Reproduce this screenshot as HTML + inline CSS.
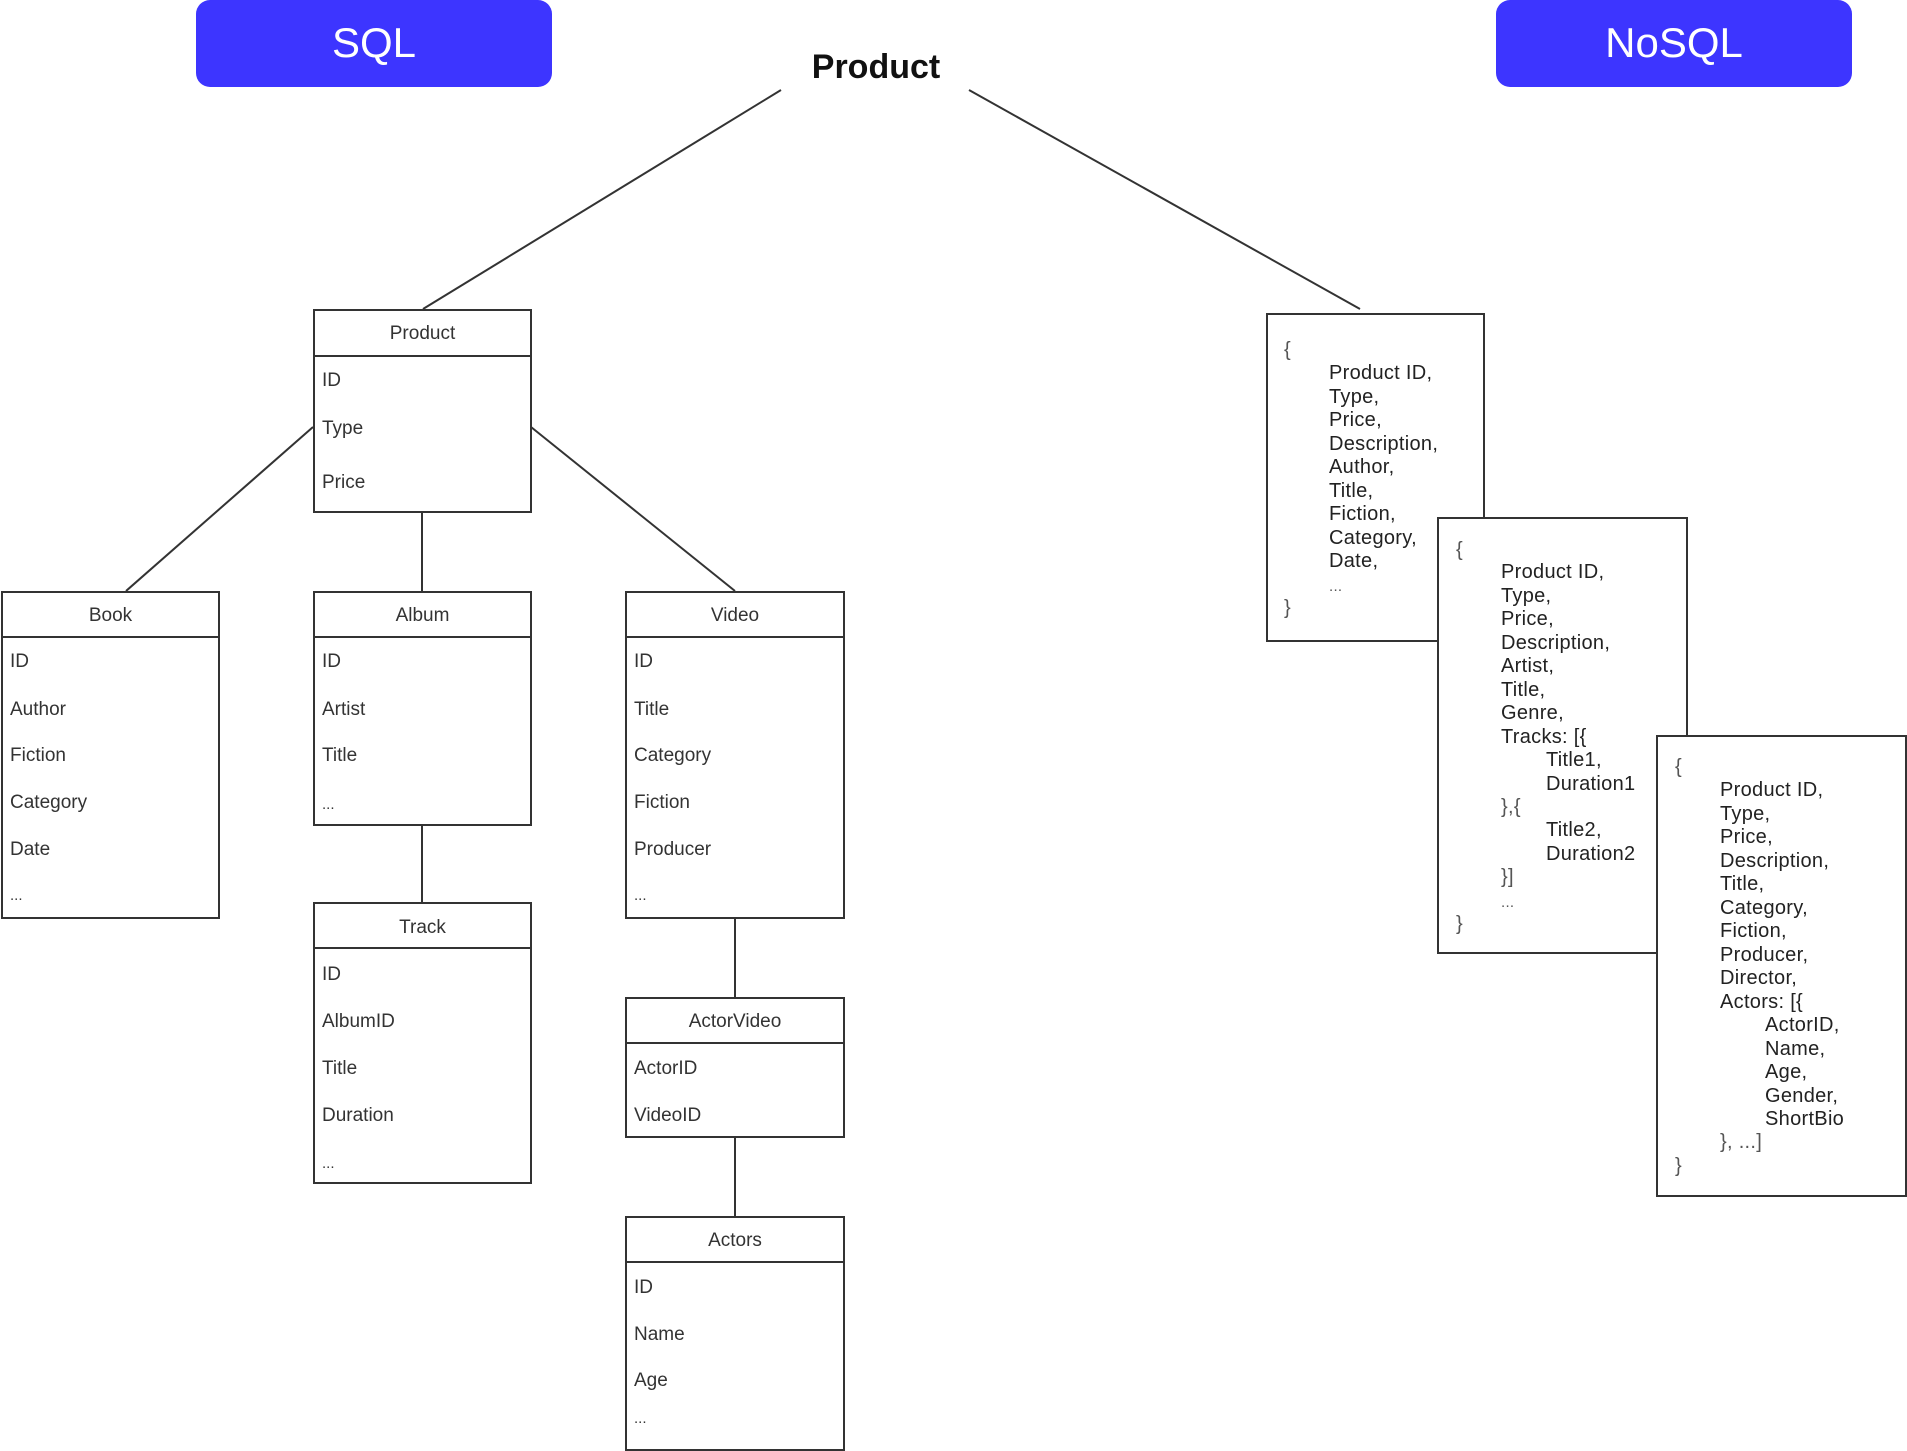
<!DOCTYPE html>
<html><head><meta charset="utf-8"><style>
body{margin:0;width:1907px;height:1451px;background:#fff;position:relative;overflow:hidden;font-family:"Liberation Sans",Arial,sans-serif;}
.a{position:absolute;white-space:pre;}
.t{position:absolute;font-size:19px;color:#333;line-height:22px;white-space:pre;margin-top:2px;}
.h{position:absolute;font-size:19px;color:#333;line-height:22px;text-align:center;margin-top:2px;}
.box{position:absolute;border:2px solid #333;background:#fff;box-sizing:border-box;}
.btn{position:absolute;background:#3d35ff;border-radius:14px;color:#fff;font-size:42px;text-align:center;line-height:86px;top:0;height:87px;}
.j{position:absolute;font-size:20px;color:#222;line-height:23.5px;white-space:pre;letter-spacing:0.3px;margin-top:1px;}
.g{color:#555;}
.e{font-size:15px !important;}
</style></head><body>
<svg width="1907" height="1451" style="position:absolute;left:0;top:0" stroke="#333" stroke-width="2">
<line x1="781" y1="90" x2="423" y2="309"/>
<line x1="969" y1="90" x2="1360" y2="309"/>
<line x1="313" y1="427" x2="126" y2="591"/>
<line x1="531" y1="427" x2="735" y2="591"/>
<line x1="422" y1="512" x2="422" y2="591"/>
<line x1="422" y1="825" x2="422" y2="902"/>
<line x1="735" y1="918" x2="735" y2="997"/>
<line x1="735" y1="1137" x2="735" y2="1216"/>
</svg>
<div class="btn" style="left:196px;width:356px;">SQL</div>
<div class="btn" style="left:1496px;width:356px;">NoSQL</div>
<div class="a" style="left:776px;top:48px;width:200px;text-align:center;font-size:34px;font-weight:bold;color:#111;">Product</div>

<div class="box" style="left:313px;top:309px;width:219px;height:204px;"></div>
<div class="box" style="left:313px;top:309px;width:219px;height:48px;"></div>
<div class="h" style="left:313px;top:321px;width:219px;">Product</div>
<div class="t" style="left:322px;top:368px;">ID</div>
<div class="t" style="left:322px;top:416px;">Type</div>
<div class="t" style="left:322px;top:470px;">Price</div>

<div class="box" style="left:1px;top:591px;width:219px;height:328px;"></div>
<div class="box" style="left:1px;top:591px;width:219px;height:47px;"></div>
<div class="h" style="left:1px;top:603px;width:219px;">Book</div>
<div class="t" style="left:10px;top:649px;">ID</div>
<div class="t" style="left:10px;top:697px;">Author</div>
<div class="t" style="left:10px;top:743px;">Fiction</div>
<div class="t" style="left:10px;top:790px;">Category</div>
<div class="t" style="left:10px;top:837px;">Date</div>
<div class="t e" style="left:10px;top:883px;">...</div>

<div class="box" style="left:313px;top:591px;width:219px;height:235px;"></div>
<div class="box" style="left:313px;top:591px;width:219px;height:47px;"></div>
<div class="h" style="left:313px;top:603px;width:219px;">Album</div>
<div class="t" style="left:322px;top:649px;">ID</div>
<div class="t" style="left:322px;top:697px;">Artist</div>
<div class="t" style="left:322px;top:743px;">Title</div>
<div class="t e" style="left:322px;top:792px;">...</div>

<div class="box" style="left:625px;top:591px;width:220px;height:328px;"></div>
<div class="box" style="left:625px;top:591px;width:220px;height:47px;"></div>
<div class="h" style="left:625px;top:603px;width:220px;">Video</div>
<div class="t" style="left:634px;top:649px;">ID</div>
<div class="t" style="left:634px;top:697px;">Title</div>
<div class="t" style="left:634px;top:743px;">Category</div>
<div class="t" style="left:634px;top:790px;">Fiction</div>
<div class="t" style="left:634px;top:837px;">Producer</div>
<div class="t e" style="left:634px;top:883px;">...</div>

<div class="box" style="left:313px;top:902px;width:219px;height:282px;"></div>
<div class="box" style="left:313px;top:902px;width:219px;height:47px;"></div>
<div class="h" style="left:313px;top:915px;width:219px;">Track</div>
<div class="t" style="left:322px;top:962px;">ID</div>
<div class="t" style="left:322px;top:1009px;">AlbumID</div>
<div class="t" style="left:322px;top:1056px;">Title</div>
<div class="t" style="left:322px;top:1103px;">Duration</div>
<div class="t e" style="left:322px;top:1151px;">...</div>

<div class="box" style="left:625px;top:997px;width:220px;height:141px;"></div>
<div class="box" style="left:625px;top:997px;width:220px;height:47px;"></div>
<div class="h" style="left:625px;top:1009px;width:220px;">ActorVideo</div>
<div class="t" style="left:634px;top:1056px;">ActorID</div>
<div class="t" style="left:634px;top:1103px;">VideoID</div>

<div class="box" style="left:625px;top:1216px;width:220px;height:235px;"></div>
<div class="box" style="left:625px;top:1216px;width:220px;height:47px;"></div>
<div class="h" style="left:625px;top:1228px;width:220px;">Actors</div>
<div class="t" style="left:634px;top:1275px;">ID</div>
<div class="t" style="left:634px;top:1322px;">Name</div>
<div class="t" style="left:634px;top:1368px;">Age</div>
<div class="t e" style="left:634px;top:1406px;">...</div>

<div class="box" style="left:1266px;top:313px;width:219px;height:329px;"></div>
<div class="j g" style="left:1284px;top:338px;">{</div>
<div class="j" style="left:1329px;top:361px;">Product ID,
Type,
Price,
Description,
Author,
Title,
Fiction,
Category,
Date,</div>
<div class="j g e" style="left:1329px;top:574px;">...</div>
<div class="j g" style="left:1284px;top:596px;">}</div>

<div class="box" style="left:1437px;top:517px;width:251px;height:437px;"></div>
<div class="j g" style="left:1456px;top:538px;">{</div>
<div class="j" style="left:1501px;top:560px;">Product ID,
Type,
Price,
Description,
Artist,
Title,
Genre,
Tracks: [{</div>
<div class="j" style="left:1546px;top:748px;">Title1,
Duration1</div>
<div class="j g" style="left:1501px;top:795px;">},{</div>
<div class="j" style="left:1546px;top:818px;">Title2,
Duration2</div>
<div class="j g" style="left:1501px;top:865px;">}]</div>
<div class="j g e" style="left:1501px;top:890px;">...</div>
<div class="j g" style="left:1456px;top:912px;">}</div>

<div class="box" style="left:1656px;top:735px;width:251px;height:462px;"></div>
<div class="j g" style="left:1675px;top:755px;">{</div>
<div class="j" style="left:1720px;top:778px;">Product ID,
Type,
Price,
Description,
Title,
Category,
Fiction,
Producer,
Director,
Actors: [{</div>
<div class="j" style="left:1765px;top:1013px;">ActorID,
Name,
Age,
Gender,
ShortBio</div>
<div class="j g" style="left:1720px;top:1130px;">}, ...]</div>
<div class="j g" style="left:1675px;top:1154px;">}</div>
</body></html>
